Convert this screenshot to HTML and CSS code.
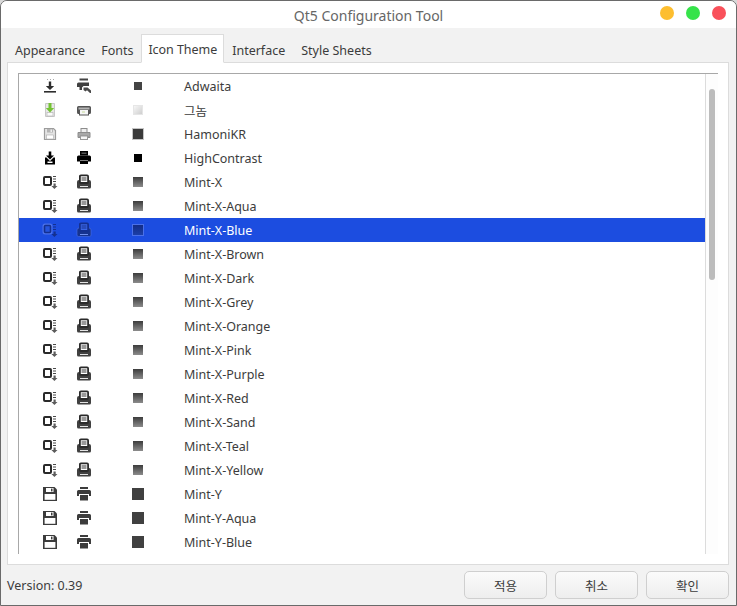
FILE: index.html
```html
<!DOCTYPE html>
<html lang="en">
<head>
<meta charset="utf-8">
<title>Qt5 Configuration Tool</title>
<link rel="stylesheet" href="styles.css">
</head>
<body>
<svg class="defs" width="0" height="0" aria-hidden="true">
  <defs>
    <symbol id="s-adw" viewBox="0 0 16 16">
      <path d="M5 1.500h1M8 1.500h1M11 1.500h1" stroke="#aaa" stroke-width="1"/>
      <path d="M6.800 3.500h2.400v4.500h3L8 12 3.800 8h3z" fill="#2e2e2e"/>
      <rect x="2" y="13" width="12" height="1.600" fill="#2e2e2e"/>
    </symbol>
    <symbol id="p-adw" viewBox="0 0 16 16">
      <rect x="3.500" y="0.500" width="8.500" height="2" fill="#444"/>
      <path d="M1 6q0-1.500 1.500-1.500h10.500V8H7.500L6 9.500V12H3.500V9H1z" fill="#3f3f3f"/>
      <path d="M7.500 9.500h4l3.500 3 0 2.500-1 0-3-2.800-1.500 1.300-2-1.500z" fill="#4a4a4a"/>
    </symbol>
    <symbol id="s-gno" viewBox="0 0 16 16">
      <path d="M3.500 1.500h9v13h-9z" fill="#e8e8e8" stroke="#c8c8c8"/>
      <rect x="5" y="10.500" width="6" height="3.500" fill="#fafafa" stroke="#b0b0b0" stroke-width=".6"/>
      <path d="M6.500 1h3v5h2.700L8 10.500 3.800 6h2.700z" fill="#74c234"/>
    </symbol>
    <symbol id="p-gno" viewBox="0 0 16 16">
      <path d="M1 5.500q0-1.500 1.500-1.500h11Q15 4 15 5.500v5Q15 12 13.500 12H13v1.500H3V12h-.5Q1 12 1 10.500z" fill="#555"/>
      <rect x="2.500" y="5.500" width="11" height="2" fill="#b4b4b4"/>
      <rect x="4" y="8" width="8" height="4.500" fill="#f6f6f6"/>
      <rect x="6" y="9.500" width="3" height="1" fill="#c6dc9a"/>
    </symbol>
    <symbol id="s-ham" viewBox="0 0 16 16">
      <path d="M2.500 2.500h9l2 2v9h-11z" fill="#e4e4e4" stroke="#9c9c9c" stroke-width="1.200"/>
      <rect x="5" y="3" width="6" height="3.500" fill="#b4b4b4"/>
      <rect x="8.500" y="3.500" width="1.500" height="2.500" fill="#eee"/>
      <rect x="4.500" y="9" width="7" height="4" fill="#fff" stroke="#aaa" stroke-width=".6"/>
    </symbol>
    <symbol id="p-ham" viewBox="0 0 16 16">
      <rect x="5" y="2.500" width="6" height="4" fill="#eee" stroke="#8c8c8c"/>
      <path d="M2 6.500h12v5h-2V10H4v1.500H2z" fill="#a8a8a8" stroke="#8c8c8c"/>
      <rect x="4.500" y="10" width="7" height="3.500" fill="#f6f6f6" stroke="#999"/>
    </symbol>
    <symbol id="s-hc" viewBox="0 0 16 16">
      <path d="M6.700 1.500h2.600v4H12L8 9.500 4 5.500h2.700z" fill="#000"/>
      <path d="M3 7.500h1.500L8 11l3.500-3.500H13v7H3z" fill="#000"/>
      <rect x="5.500" y="11.500" width="5" height="1.500" fill="#fff"/>
    </symbol>
    <symbol id="p-hc" viewBox="0 0 16 16">
      <path d="M4 1h8v4.500H4z" fill="#000"/>
      <rect x="5.500" y="2.500" width="5" height="1.500" fill="#555"/>
      <path d="M1 7q0-1.500 1.500-1.500h11Q15 5.500 15 7v4.500h-3V10H4v1.500H1z" fill="#000"/>
      <rect x="4" y="10.500" width="8" height="3.500" fill="#000"/>
    </symbol>
    <symbol id="s-mx" viewBox="0 0 16 16">
      <rect x="2" y="3" width="7" height="8" rx="1" fill="#fff" stroke="#2a2a2a" stroke-width="2"/>
      <path d="M11 2.500h3M11 5h3M11 7.500h3" stroke="#4a4a4a"/>
      <path d="M11.500 9.500h2.200V12H15.500l-3.100 3-3-3h2.100z" fill="#5c5c5c"/>
    </symbol>
    <symbol id="p-mx" viewBox="0 0 16 16">
      <path d="M1 8q0-2 2-2h10q2 0 2 2v5q0 1.500-1.500 1.500h-11Q1 14.500 1 13z" fill="#404040"/>
      <rect x="3.900" y="1.400" width="8.200" height="7.600" rx="1" fill="#fff" stroke="#2a2a2a" stroke-width="1.800"/>
      <path d="M5.500 4h5M5.500 6h5" stroke="#333"/>
      <path d="M4 12.500h8" stroke="#e4e4e4"/>
    </symbol>
    <symbol id="s-mx-sel" viewBox="0 0 16 16">
      <rect x="1.500" y="2.500" width="8" height="9" rx="1.500" fill="#2f5de4" stroke="#4a70e8" stroke-width="2"/>
      <rect x="2.500" y="3.500" width="6" height="7" rx="1" fill="#2654dc" stroke="#143090" stroke-width="1.600"/>
      <path d="M11 2.500h3M11 5h3M11 7.500h3" stroke="#14308f"/>
      <path d="M11.500 9.500h2.200V12H15.500l-3.100 3-3-3h2.100z" fill="#14308f"/>
    </symbol>
    <symbol id="p-mx-sel" viewBox="0 0 16 16">
      <path d="M1 8q0-2 2-2h10q2 0 2 2v5q0 1.500-1.500 1.500h-11Q1 14.500 1 13z" fill="#16338f" stroke="#4a70e8" stroke-width=".6"/>
      <rect x="3.900" y="1.400" width="8.200" height="7.600" rx="1" fill="#3a66e6" stroke="#143090" stroke-width="1.800"/>
      <path d="M5.500 4h5M5.500 6h5" stroke="#143090"/>
      <path d="M4 12.500h8" stroke="#6f8fee"/>
    </symbol>
    <symbol id="s-my" viewBox="0 0 16 16">
      <path d="M1 1h11.500L15 3.500V15H1z" fill="#3c3c3c"/>
      <rect x="4" y="2" width="7.500" height="4" fill="#fff"/>
      <rect x="9" y="2.600" width="1.500" height="2.800" fill="#3c3c3c"/>
      <rect x="2.600" y="8" width="10.800" height="5.800" fill="#fff"/>
    </symbol>
    <symbol id="p-my" viewBox="0 0 16 16">
      <rect x="4" y="1" width="8" height="2" fill="#3c3c3c"/>
      <path d="M2.500 4h11Q15 4 15 5.500V10h-2V8H3v2H1V5.500Q1 4 2.500 4z" fill="#3c3c3c"/>
      <rect x="4" y="9" width="8" height="5.500" fill="#3c3c3c"/>
    </symbol>
  </defs>
</svg>
<div class="window">
  <header class="titlebar">
    <span class="title">Qt5 Configuration Tool</span>
    <div class="lights">
      <span class="light light-min"></span>
      <span class="light light-max"></span>
      <span class="light light-close"></span>
    </div>
  </header>
  <main class="body">
    <nav class="tabs">
      <span class="tab">Appearance</span>
      <span class="tab">Fonts</span>
      <span class="tab tab-active">Icon Theme</span>
      <span class="tab">Interface</span>
      <span class="tab">Style Sheets</span>
    </nav>
    <section class="pane">
      <div class="tree">
        <div class="rows">
          <div class="row"><svg class="ic"><use href="#s-adw"/></svg><svg class="ic"><use href="#p-adw"/></svg><span class="sw"><span class="sq sq-adw"></span></span><span class="name">Adwaita</span></div>
          <div class="row"><svg class="ic"><use href="#s-gno"/></svg><svg class="ic"><use href="#p-gno"/></svg><span class="sw"><span class="sq sq-gno"></span></span><span class="name">그놈</span></div>
          <div class="row"><svg class="ic"><use href="#s-ham"/></svg><svg class="ic"><use href="#p-ham"/></svg><span class="sw"><span class="sq sq-ham"></span></span><span class="name">HamoniKR</span></div>
          <div class="row"><svg class="ic"><use href="#s-hc"/></svg><svg class="ic"><use href="#p-hc"/></svg><span class="sw"><span class="sq sq-hc"></span></span><span class="name">HighContrast</span></div>
          <div class="row"><svg class="ic"><use href="#s-mx"/></svg><svg class="ic"><use href="#p-mx"/></svg><span class="sw"><span class="sq sq-mx"></span></span><span class="name">Mint-X</span></div>
          <div class="row"><svg class="ic"><use href="#s-mx"/></svg><svg class="ic"><use href="#p-mx"/></svg><span class="sw"><span class="sq sq-mx"></span></span><span class="name">Mint-X-Aqua</span></div>
          <div class="row row-selected"><svg class="ic"><use href="#s-mx-sel"/></svg><svg class="ic"><use href="#p-mx-sel"/></svg><span class="sw"><span class="sq sq-sel"></span></span><span class="name">Mint-X-Blue</span></div>
          <div class="row"><svg class="ic"><use href="#s-mx"/></svg><svg class="ic"><use href="#p-mx"/></svg><span class="sw"><span class="sq sq-mx"></span></span><span class="name">Mint-X-Brown</span></div>
          <div class="row"><svg class="ic"><use href="#s-mx"/></svg><svg class="ic"><use href="#p-mx"/></svg><span class="sw"><span class="sq sq-mx"></span></span><span class="name">Mint-X-Dark</span></div>
          <div class="row"><svg class="ic"><use href="#s-mx"/></svg><svg class="ic"><use href="#p-mx"/></svg><span class="sw"><span class="sq sq-mx"></span></span><span class="name">Mint-X-Grey</span></div>
          <div class="row"><svg class="ic"><use href="#s-mx"/></svg><svg class="ic"><use href="#p-mx"/></svg><span class="sw"><span class="sq sq-mx"></span></span><span class="name">Mint-X-Orange</span></div>
          <div class="row"><svg class="ic"><use href="#s-mx"/></svg><svg class="ic"><use href="#p-mx"/></svg><span class="sw"><span class="sq sq-mx"></span></span><span class="name">Mint-X-Pink</span></div>
          <div class="row"><svg class="ic"><use href="#s-mx"/></svg><svg class="ic"><use href="#p-mx"/></svg><span class="sw"><span class="sq sq-mx"></span></span><span class="name">Mint-X-Purple</span></div>
          <div class="row"><svg class="ic"><use href="#s-mx"/></svg><svg class="ic"><use href="#p-mx"/></svg><span class="sw"><span class="sq sq-mx"></span></span><span class="name">Mint-X-Red</span></div>
          <div class="row"><svg class="ic"><use href="#s-mx"/></svg><svg class="ic"><use href="#p-mx"/></svg><span class="sw"><span class="sq sq-mx"></span></span><span class="name">Mint-X-Sand</span></div>
          <div class="row"><svg class="ic"><use href="#s-mx"/></svg><svg class="ic"><use href="#p-mx"/></svg><span class="sw"><span class="sq sq-mx"></span></span><span class="name">Mint-X-Teal</span></div>
          <div class="row"><svg class="ic"><use href="#s-mx"/></svg><svg class="ic"><use href="#p-mx"/></svg><span class="sw"><span class="sq sq-mx"></span></span><span class="name">Mint-X-Yellow</span></div>
          <div class="row"><svg class="ic"><use href="#s-my"/></svg><svg class="ic"><use href="#p-my"/></svg><span class="sw"><span class="sq sq-my"></span></span><span class="name">Mint-Y</span></div>
          <div class="row"><svg class="ic"><use href="#s-my"/></svg><svg class="ic"><use href="#p-my"/></svg><span class="sw"><span class="sq sq-my"></span></span><span class="name">Mint-Y-Aqua</span></div>
          <div class="row"><svg class="ic"><use href="#s-my"/></svg><svg class="ic"><use href="#p-my"/></svg><span class="sw"><span class="sq sq-my"></span></span><span class="name">Mint-Y-Blue</span></div>
        </div>
        <div class="scrollbar"><div class="thumb"></div></div>
      </div>
    </section>
    <footer class="footer">
      <span class="version">Version: 0.39</span>
      <div class="buttons">
        <button class="btn" type="button">적용</button>
        <button class="btn" type="button">취소</button>
        <button class="btn" type="button">확인</button>
      </div>
    </footer>
  </main>
</div>
</body>
</html>
```
FILE: styles.css
```css
* { box-sizing: border-box; }
html, body { margin: 0; padding: 0; height: 100%; }
body {
  background: #d8d8d8;
  font-family: "Noto Sans", "Noto Sans CJK KR", sans-serif;
  font-size: 12.5px;
  color: #3c3c3c;
  overflow: hidden;
}
.defs { display: block; height: 0; }
.window {
  height: 606px;
  width: 737px;
  display: flex;
  flex-direction: column;
  border: 1px solid #6a6a6a;
  border-radius: 7px 7px 0 0;
  overflow: hidden;
  background: #f2f2f2;
}
.titlebar {
  height: 27px;
  flex: none;
  background: #fff;
  display: flex;
  align-items: center;
  justify-content: center;
  padding-top: 1px;
  position: relative;
}
.title { font-size: 14px; color: #666; }
.lights {
  position: absolute;
  top: 5px;
  right: 10px;
  display: flex;
  gap: 12px;
}
.light { width: 14px; height: 14px; border-radius: 50%; }
.light-min { background: #fdbe2f; }
.light-max { background: #36e34a; }
.light-close { background: #f9505a; }
.body {
  flex: 1;
  min-height: 0;
  display: flex;
  flex-direction: column;
  padding: 6px 7px 0 6px;
}
.tabs {
  display: flex;
  align-items: flex-end;
  height: 29px;
  flex: none;
  position: relative;
  z-index: 1;
  margin-bottom: -1px;
}
.tab {
  height: 29px;
  line-height: 33px;
  padding: 0 8px;
  white-space: nowrap;
}
.tab-active {
  background: #fff;
  border: 1px solid #dcdcdc;
  border-bottom-color: #fff;
  line-height: 29px;
  padding: 0 6px;
  letter-spacing: -0.05px;
}
.pane {
  height: 503px;
  flex: none;
  background: #fff;
  border: 1px solid #dcdcdc;
  padding: 10px;
}
.tree {
  height: 481px;
  display: flex;
  border-top: 1px solid #a8a8a8;
  border-left: 1px solid #a8a8a8;
}
.rows { flex: 1; min-width: 0; overflow: hidden; }
.row {
  height: 24px;
  display: flex;
  align-items: center;
  padding-left: 23px;
}
.ic { width: 16px; height: 16px; flex: none; }
.ic + .ic { margin-left: 18px; }
.sw {
  width: 16px;
  height: 16px;
  margin-left: 38px;
  margin-right: 38px;
  flex: none;
  display: flex;
  align-items: center;
  justify-content: center;
}
.sq { display: block; }
.sq-adw { width: 8px; height: 8px; background: #444; }
.sq-gno { width: 8px; height: 8px; background: linear-gradient(135deg, #f6f6f6, #cfcfcf); outline: 1px solid #e6e6e6; }
.sq-ham { width: 12px; height: 12px; background: #3a3a3a; outline: 1px solid #c4c4c4; outline-offset: -1px; }
.sq-hc { width: 8px; height: 8px; background: #000; }
.sq-mx { width: 10px; height: 10px; background: linear-gradient(#3c3c3c, #8c8c8c); }
.sq-sel { width: 12px; height: 12px; background: linear-gradient(#122c86, #1c3fa8); border: 1px solid #4a70e8; }
.sq-my { width: 12px; height: 12px; background: #404040; }
.name { white-space: nowrap; }
.row-selected { background: #1c4de0; color: #fff; }
.scrollbar {
  width: 13px;
  flex: none;
  background: #fdfdfd;
  border-left: 1px solid #dcdcdc;
  padding: 15px 3px 0;
}
.thumb {
  width: 6px;
  height: 191px;
  border-radius: 3px;
  background: #bcbcbc;
}
.footer {
  flex: 1;
  display: flex;
  align-items: center;
  justify-content: space-between;
}
.buttons { display: flex; gap: 8px; }
.btn {
  width: 83px;
  height: 28px;
  padding: 0;
  font: inherit;
  color: #3c3c3c;
  border: 1px solid #cfcfcf;
  border-radius: 5px;
  background: linear-gradient(#fbfbfb, #eeeeee);
}
```
